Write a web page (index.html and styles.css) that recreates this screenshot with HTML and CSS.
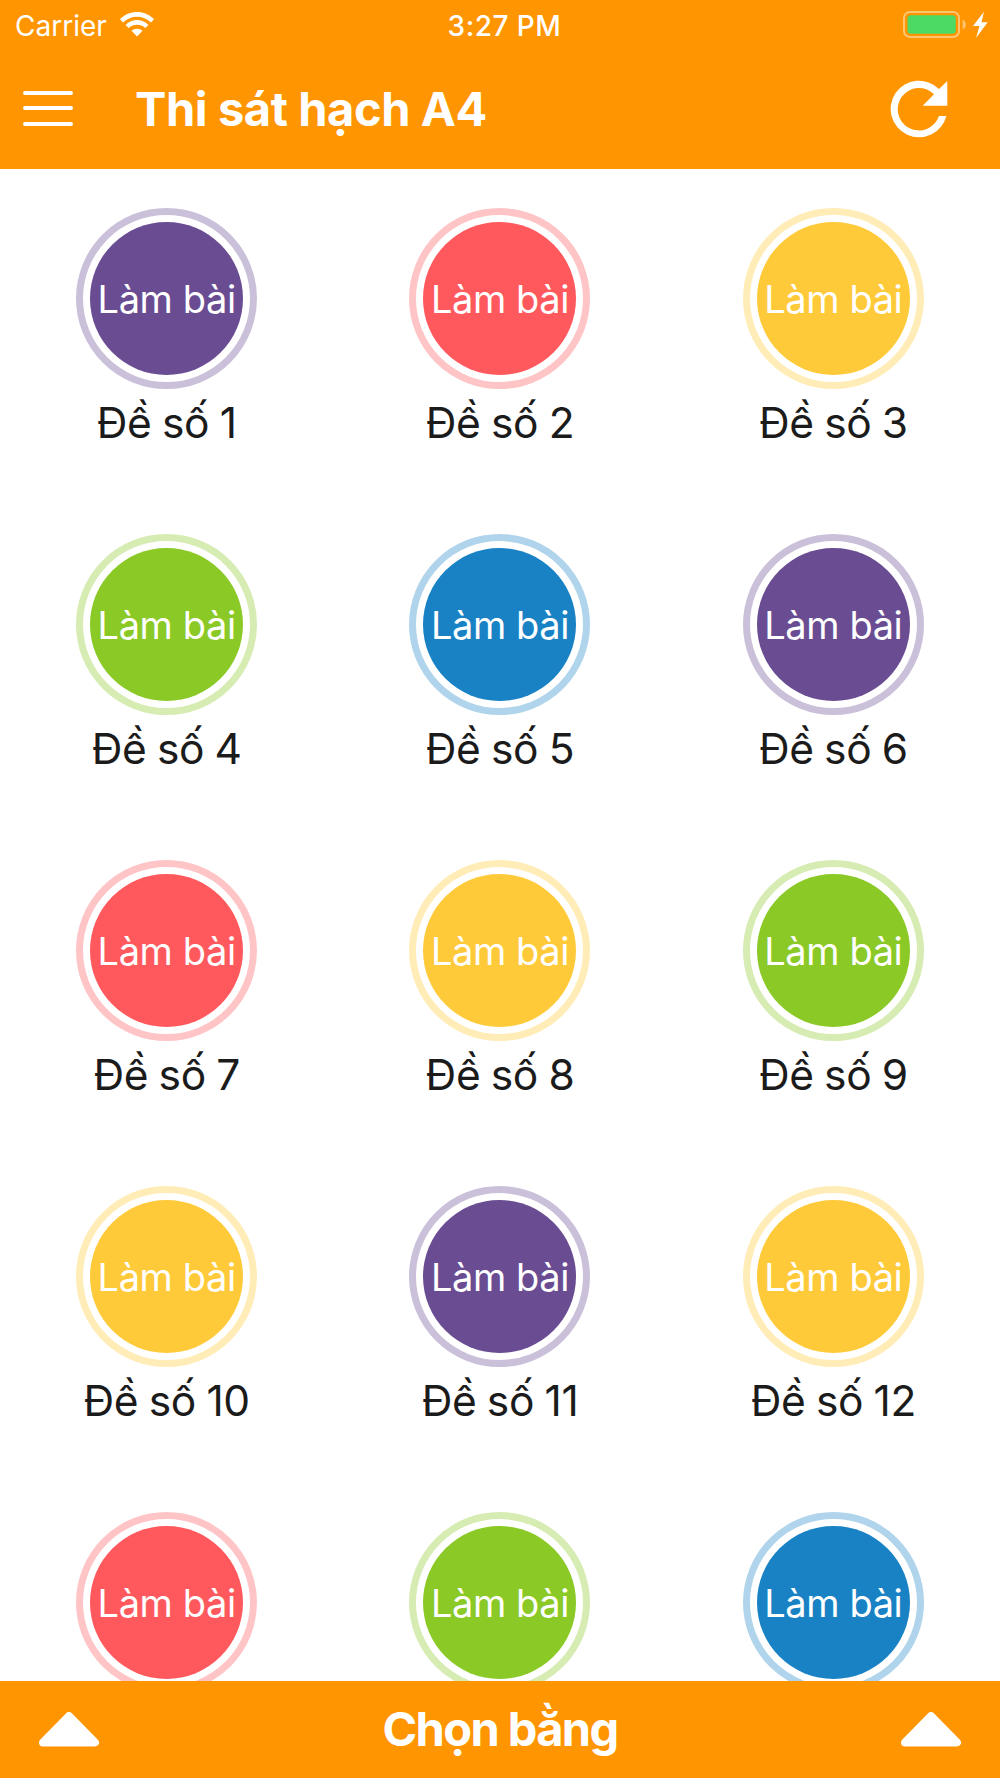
FILE: index.html
```html
<!DOCTYPE html>
<html lang="vi">
<head>
  <meta charset="UTF-8" />
  <meta name="viewport" content="width=device-width, initial-scale=1.0" />
  <title>Thi sát hạch A4</title>
  <link rel="stylesheet" href="styles.css">
</head>
<body>
  <header>
    <div class="status-bar">
      <div class="carrier">
        <span>Carrier</span>
        <svg class="wifi" width="34" height="25" viewBox="0 0 34 25">
          <path d="M0 7.3C9.500-2.400 24.500-2.400 34 7.300L31 10.500C23 2.700 11 2.700 3 10.500Z" />
          <path d="M5.500 12.900C12 6.500 22 6.500 28.500 12.900L25.300 16.100C20.500 11.700 13.500 11.700 8.700 16.100Z" />
          <path d="M11.500 18.800C14.600 15.900 19.400 15.900 22.500 18.800L17 24.500Z" />
        </svg>
      </div>
      <div class="time">3:27 PM</div>
      <div class="power">
        <svg width="86" height="28" viewBox="0 0 86 28">
          <rect x="1" y="1" width="55" height="25" rx="6" fill="none" stroke="#fff" stroke-width="2" opacity=".45" />
          <rect x="4.500" y="4.300" width="48.300" height="18.400" rx="3.500" fill="#4cd964" />
          <path d="M59.700 8.500Q62.700 10 62.700 13.500T59.700 18.500Z" opacity=".45" />
          <path d="M81 .8L70 15h6.500L73 27 84.700 11.300H78.500Z" />
        </svg>
      </div>
    </div>
    <div class="nav-bar">
      <button class="menu-button" aria-label="Menu"><i></i><i></i><i></i></button>
      <h1>Thi sát hạch A4</h1>
      <button class="refresh-button" aria-label="Làm mới">
        <svg width="58" height="58" viewBox="0 0 58 58">
          <path d="M56.400 36A28.300 28.300 0 1 1 49 9L57.300 1V25.700H32.700L44 14.300A21.200 21.200 0 1 0 49 36Z" />
        </svg>
      </button>
    </div>
  </header>

  <main class="exam-grid">
    <div class="exam purple"><button class="circle">Làm bài</button><p>Đề số 1</p></div>
    <div class="exam red"><button class="circle">Làm bài</button><p>Đề số 2</p></div>
    <div class="exam yellow"><button class="circle">Làm bài</button><p>Đề số 3</p></div>
    <div class="exam green"><button class="circle">Làm bài</button><p>Đề số 4</p></div>
    <div class="exam blue"><button class="circle">Làm bài</button><p>Đề số 5</p></div>
    <div class="exam purple"><button class="circle">Làm bài</button><p>Đề số 6</p></div>
    <div class="exam red"><button class="circle">Làm bài</button><p>Đề số 7</p></div>
    <div class="exam yellow"><button class="circle">Làm bài</button><p>Đề số 8</p></div>
    <div class="exam green"><button class="circle">Làm bài</button><p>Đề số 9</p></div>
    <div class="exam yellow"><button class="circle">Làm bài</button><p>Đề số 10</p></div>
    <div class="exam purple"><button class="circle">Làm bài</button><p>Đề số 11</p></div>
    <div class="exam yellow"><button class="circle">Làm bài</button><p>Đề số 12</p></div>
    <div class="exam red"><button class="circle">Làm bài</button></div>
    <div class="exam green"><button class="circle">Làm bài</button></div>
    <div class="exam blue"><button class="circle">Làm bài</button></div>
  </main>

  <footer>
    <svg width="62" height="36" viewBox="0 0 62 36"><path d="M31 4L57 30.500H5Z" /></svg>
    <span>Chọn bằng</span>
    <svg width="62" height="36" viewBox="0 0 62 36"><path d="M31 4L57 30.500H5Z" /></svg>
  </footer>
</body>
</html>
```
FILE: styles.css
```css
* {
  box-sizing: border-box;
}
body {
  font-family: Inter, "Liberation Sans", sans-serif;
  margin: 0;
  height: 1778px;
  display: flex;
  flex-direction: column;
  overflow: hidden;
  background-color: #fff;
}
button {
  font-family: inherit;
  border: none;
  padding: 0;
  background: none;
  cursor: pointer;
}
svg {
  display: block;
  fill: #fff;
}
header {
  flex: none;
  height: 169px;
  background-color: #ff9500;
  color: #fff;
}
.status-bar {
  display: grid;
  grid-template-columns: 1fr auto 1fr;
  height: 51px;
  padding: 0 11px 0 15px;
  align-items: center;
  font-size: 28px;
}
.carrier {
  display: flex;
  align-items: center;
  gap: 13px;
}
.wifi {
  margin-top: -2px;
}
.time {
  font-weight: 500;
  letter-spacing: 0.5px;
  padding-left: 5px;
}
.power {
  display: flex;
  justify-content: flex-end;
}
.power svg {
  margin-top: -1px;
}
.nav-bar {
  display: flex;
  align-items: center;
  height: 116px;
  padding: 0 52px 0 23px;
}
.menu-button {
  display: flex;
  flex-direction: column;
  gap: 11.5px;
  width: 50px;
  margin-top: -2px;
}
.menu-button i {
  height: 4px;
  border-radius: 2px;
  background-color: #fff;
}
h1 {
  flex: 1;
  margin: -2px 0 0 62px;
  font-size: 47px;
  font-weight: 700;
  letter-spacing: -0.4px;
}
.exam-grid {
  flex: 1;
  min-height: 0;
  overflow: hidden;
  display: grid;
  grid-template-columns: repeat(3, 1fr);
  grid-auto-rows: 326px;
  padding-top: 39px;
}
.exam {
  display: flex;
  flex-direction: column;
  align-items: center;
}
.circle {
  flex: none;
  width: 181px;
  height: 181px;
  padding: 7px;
  border: 7px solid var(--ring);
  border-radius: 50%;
  background: var(--fill) content-box;
  color: #fff;
  font-size: 38px;
  letter-spacing: -0.4px;
  white-space: nowrap;
}
.exam p {
  margin: 7px 0 0;
  font-size: 42.5px;
  line-height: 53px;
  letter-spacing: -0.4px;
  word-spacing: -1px;
  color: #1b1b1b;
}
.purple {
  --fill: #6a4c93;
  --ring: #cac0da;
}
.red {
  --fill: #ff595e;
  --ring: #ffc4c6;
}
.yellow {
  --fill: #ffca3a;
  --ring: #ffecb6;
}
.green {
  --fill: #8ac926;
  --ring: #d6ecb2;
}
.blue {
  --fill: #1982c4;
  --ring: #afd4eb;
}
footer {
  flex: none;
  display: flex;
  justify-content: space-between;
  align-items: center;
  height: 97px;
  padding: 0 38px;
  background-color: #ff9500;
  color: #fff;
  font-size: 47px;
  font-weight: 700;
  letter-spacing: -1.6px;
}
footer span {
  margin-top: -2px;
}
footer svg {
  stroke: #fff;
  stroke-width: 8px;
  stroke-linejoin: round;
}
```
